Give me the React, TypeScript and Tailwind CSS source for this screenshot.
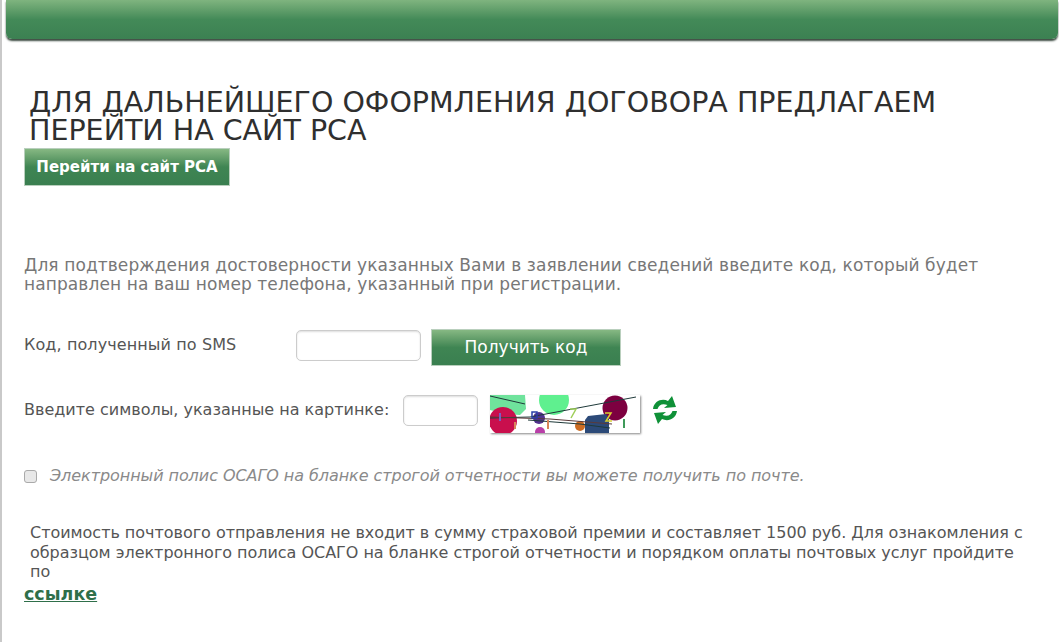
const GREEN_BUTTON =
  "bg-gradient-to-b from-[#86b883] via-[#3f8553] to-[#3a7f50] border border-[#b9cfbd] text-white";

function Captcha() {
  return (
    <svg width="150" height="38" viewBox="0 0 150 38" className="block shadow-[1px_1px_2px_#888]">
      <rect width="150" height="38" fill="#fff" />
      <polygon points="0,0 35,0 36,14 30,20 16,19 0,15" fill="#6fe39c" />
      <circle cx="64" cy="5" r="15" fill="#5ff08f" />
      <circle cx="13" cy="26" r="14" fill="#c90f4d" />
      <circle cx="125" cy="13" r="12.500" fill="#7d0040" />
      <polygon points="98,21 116,19 119,24 119,38 95,38 95,25" fill="#2c4a78" />
      <circle cx="49" cy="23" r="6" fill="#52328f" />
      <circle cx="50" cy="37" r="5" fill="#b93fa8" />
      <circle cx="90" cy="31" r="5" fill="#cd6c22" />
      <path d="M0 1 L35 9 M0 23 L40 22 L146 2 M38 25 L90 29 L120 33" stroke="#1f3a3a" strokeWidth="1" fill="none" />
      <path d="M0 22 L60 24 L122 29" stroke="#5a3a3a" strokeWidth="1" fill="none" />
      <path d="M42 17 h5 v6 h-5 z" fill="none" stroke="#2a3ea8" strokeWidth="1.500" />
      <path d="M25 27 v7 M58 25 v9" stroke="#d9855a" strokeWidth="2" />
      <path d="M80 14 h6 l-5 9" stroke="#9fcf5a" strokeWidth="1.500" fill="none" />
      <path d="M115 18 h6 l-5 8 h6" stroke="#d8d030" strokeWidth="1.500" fill="none" />
      <path d="M134 24 v9" stroke="#3f9a5a" strokeWidth="2" />
      <path d="M10 18 v8" stroke="#7a5fc0" strokeWidth="2" />
    </svg>
  );
}

function RefreshIcon() {
  return (
    <svg width="24" height="30" viewBox="0 0 24 30" className="ml-[13px] shrink-0">
      <path d="M0 14 C1 6 9 3 15 6 L19 1 L23 12 L11 13 L14.500 10 C9 8 6 10 4.500 14 Z" fill="#0f9138" />
      <path d="M24 16 C23 24 15 27 9 24 L5 29 L1 18 L13 17 L9.500 20 C15 22 18 20 19.500 16 Z" fill="#0f9138" />
    </svg>
  );
}

export default function App() {
  return (
    <div className="h-[642px] w-[1059px] overflow-hidden border-l-2 border-[#c9c9c9] bg-white font-['DejaVu_Sans','Liberation_Sans',sans-serif]">
      <div className="ml-[4px] mr-[1px] h-[39px] rounded-b-[6px] bg-gradient-to-b from-[#7fb47f] via-[#438a58] via-50% to-[#3c8052] shadow-[0_2px_2px_#3b4a40]" />

      <h1 className="ml-[27px] mt-[50px] w-[960px] text-[28.500px] leading-[28px] text-[#2f2f2f]">
        ДЛЯ ДАЛЬНЕЙШЕГО ОФОРМЛЕНИЯ ДОГОВОРА ПРЕДЛАГАЕМ ПЕРЕЙТИ НА САЙТ РСА
      </h1>

      <button className={`ml-[22px] mt-[3px] block h-[38px] w-[206px] text-[15px] font-bold ${GREEN_BUTTON}`}>
        Перейти на сайт РСА
      </button>

      <p className="ml-[22px] mt-[70px] w-[960px] text-[17px] leading-[19px] tracking-[0.1px] text-[#777]">
        Для подтверждения достоверности указанных Вами в заявлении сведений введите код, который будет
        направлен на ваш номер телефона, указанный при регистрации.
      </p>

      <div className="ml-[22px] mt-[35px] flex items-start">
        <span className="mt-[7px] w-[272px] text-[16px] leading-[18px] tracking-[0.1px] text-[#555]">
          Код, полученный по SMS
        </span>
        <input className="mt-[1px] h-[31px] w-[125px] rounded-[5px] border border-[#ccc] bg-white shadow-[inset_0_1px_2px_#ddd]" />
        <button className={`ml-[10px] h-[37px] w-[190px] text-[17px] ${GREEN_BUTTON}`}>Получить код</button>
      </div>

      <div className="ml-[22px] mt-[29px] flex items-start">
        <span className="mt-[6px] w-[379px] text-[16px] leading-[18px] text-[#555]">
          Введите символы, указанные на картинке:
        </span>
        <input className="h-[31px] w-[75px] shrink-0 rounded-[5px] border border-[#ccc] bg-white shadow-[inset_0_1px_2px_#ddd]" />
        <div className="ml-[12px] shrink-0">
          <Captcha />
        </div>
        <RefreshIcon />
      </div>

      <label className="ml-[22px] mt-[34px] flex items-center">
        <span className="h-[13px] w-[13px] rounded-[3px] border border-[#aaa] bg-[#e8e8e8]" />
        <span className="ml-[13px] text-[16px] italic leading-[18px] tracking-[-0.06px] text-[#8a8a8a]">
          Электронный полис ОСАГО на бланке строгой отчетности вы можете получить по почте.
        </span>
      </label>

      <p className="ml-[28px] mt-[38px] w-[1000px] text-[16px] leading-[19.500px] tracking-[-0.03px] text-[#555]">
        Стоимость почтового отправления не входит в сумму страховой премии и составляет 1500 руб. Для ознакомления с
        образцом электронного полиса ОСАГО на бланке строгой отчетности и порядком оплаты почтовых услуг пройдите
        по
      </p>
      <a className="ml-[22px] mt-[2px] block w-fit text-[17.500px] font-bold leading-[20px] text-[#2f6f4a] underline">
        ссылке
      </a>
    </div>
  );
}
